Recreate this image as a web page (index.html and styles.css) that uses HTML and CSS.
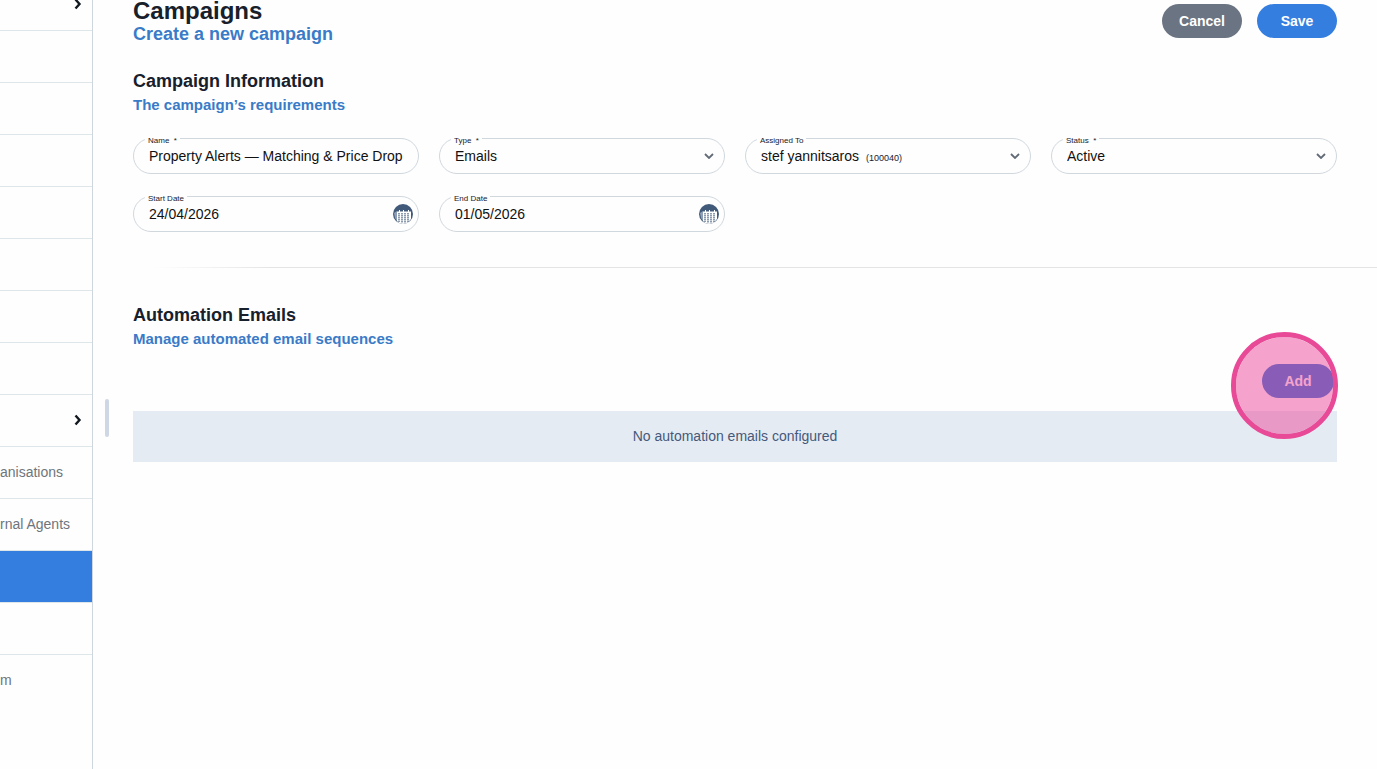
FILE: index.html
```
<!DOCTYPE html>
<html lang="en">
<head>
    <meta charset="UTF-8">
    <meta name="viewport" content="width=device-width, initial-scale=1.0">
    <title>Campaigns</title>
    <link rel="stylesheet" href="styles.css">
</head>
<body>

    <nav class="sidebar" aria-label="Main">
        <ul class="menu">
            <li class="menu-item expandable"><svg class="menu-arrow" viewBox="0 0 8 12"><path d="M1.5 1.5L5.5 6l-4 4.5"/></svg></li>
            <li class="menu-item"></li>
            <li class="menu-item"></li>
            <li class="menu-item"></li>
            <li class="menu-item"></li>
            <li class="menu-item"></li>
            <li class="menu-item"></li>
            <li class="menu-item"></li>
            <li class="menu-item expandable"><svg class="menu-arrow" viewBox="0 0 8 12"><path d="M1.5 1.5L5.5 6l-4 4.5"/></svg></li>
            <li class="menu-item"><a href="#">anisations</a></li>
            <li class="menu-item"><a href="#">rnal Agents</a></li>
            <li class="menu-item active"></li>
            <li class="menu-item"></li>
            <li class="menu-item last"><a href="#">m</a></li>
        </ul>
    </nav>

    <div class="splitter"><span class="splitter-handle"></span></div>

    <main class="main">
        <header class="page-header">
            <div>
                <h1>Campaigns</h1>
                <p class="page-subtitle">Create a new campaign</p>
            </div>
            <div class="actions">
                <button type="button" class="btn btn-grey">Cancel</button>
                <button type="button" class="btn btn-blue">Save</button>
            </div>
        </header>

        <section class="info">
            <h2>Campaign Information</h2>
            <p class="subtitle">The campaign’s requirements</p>

            <form class="fields">
                <div class="field">
                    <label for="name">Name&nbsp; *</label>
                    <input type="text" id="name" value="Property Alerts — Matching &amp; Price Drop">
                </div>
                <div class="field">
                    <label for="type">Type&nbsp; *</label>
                    <select id="type">
                        <option>Emails</option>
                    </select>
                    <svg class="chevron" viewBox="0 0 10 6"><path d="M1 1l4 4 4-4"/></svg>
                </div>
                <div class="field">
                    <label for="assigned">Assigned To</label>
                    <select id="assigned" class="fit">
                        <option>stef yannitsaros</option>
                    </select>
                    <span class="user-id">(100040)</span>
                    <svg class="chevron" viewBox="0 0 10 6"><path d="M1 1l4 4 4-4"/></svg>
                </div>
                <div class="field">
                    <label for="status">Status&nbsp; *</label>
                    <select id="status">
                        <option>Active</option>
                    </select>
                    <svg class="chevron" viewBox="0 0 10 6"><path d="M1 1l4 4 4-4"/></svg>
                </div>
                <div class="field">
                    <label for="start">Start Date</label>
                    <input type="text" id="start" value="24/04/2026">
                    <button type="button" class="date-btn" aria-label="Pick start date">
                        <svg viewBox="0 0 20 20">
                            <circle cx="10" cy="10" r="10" fill="#425a7a"/>
                            <path d="M1 9l3-2v10l-2-3z" fill="#8fa0b6"/>
                            <path d="M4 7.5h2V6h1v1.500h3V6h1v1.500h4V6h1v1.500h2V15l-3 3.500-5 1.500-4-1-2-2z" fill="#fff"/>
                            <path d="M6 9v9M9 9v10M12 9v10M15 9v9" stroke="#425a7a" stroke-width="1.200" stroke-dasharray="1.600 .4"/>
                        </svg>
                    </button>
                </div>
                <div class="field">
                    <label for="end">End Date</label>
                    <input type="text" id="end" value="01/05/2026">
                    <button type="button" class="date-btn" aria-label="Pick end date">
                        <svg viewBox="0 0 20 20">
                            <circle cx="10" cy="10" r="10" fill="#425a7a"/>
                            <path d="M1 9l3-2v10l-2-3z" fill="#8fa0b6"/>
                            <path d="M4 7.5h2V6h1v1.500h3V6h1v1.500h4V6h1v1.500h2V15l-3 3.500-5 1.500-4-1-2-2z" fill="#fff"/>
                            <path d="M6 9v9M9 9v10M12 9v10M15 9v9" stroke="#425a7a" stroke-width="1.200" stroke-dasharray="1.600 .4"/>
                        </svg>
                    </button>
                </div>
            </form>
        </section>

        <hr class="divider">

        <section class="emails">
            <h2>Automation Emails</h2>
            <p class="subtitle">Manage automated email sequences</p>
            <div class="toolbar">
                <div class="spot">
                    <button type="button" class="btn btn-add">Add</button>
                    <span class="spot-ring"></span>
                </div>
            </div>
            <p class="empty">No automation emails configured</p>
        </section>
    </main>

</body>
</html>
```
FILE: styles.css
```
:root {
    --blue: #347ee0;
    --link: #3a7bc8;
    --text: #17202b;
    --line: #dfe6ea;
    --page: #fefefe;
}

* {
    margin: 0;
    padding: 0;
    box-sizing: border-box;
}

body {
    display: flex;
    height: 100vh;
    overflow: hidden;
    font-family: "Liberation Sans", Arial, sans-serif;
    font-size: 14px;
    color: var(--text);
    background: var(--page);
}

/* Sidebar */
.sidebar {
    flex: 0 0 93px;
    overflow: hidden;
    border-right: 1px solid #cfd6de;
}

.menu {
    margin-top: -21px;
    list-style: none;
}

.menu-item {
    display: flex;
    align-items: center;
    height: 52px;
    padding-bottom: 2px;
    border-bottom: 1px solid var(--line);
    white-space: nowrap;
}

.menu-item a {
    color: #6f757b;
    text-decoration: none;
}

.menu-item.expandable {
    justify-content: flex-end;
    padding-right: 10px;
}

.menu-item.active {
    background: var(--blue);
}

.menu-item.last {
    border-bottom: none;
}

.menu-arrow {
    width: 8px;
    height: 12px;
    fill: none;
    stroke: #111820;
    stroke-width: 2.4;
}

/* Drag handle between sidebar and page */
.splitter {
    display: flex;
    flex: 0 0 28px;
    align-items: center;
    justify-content: center;
    padding-top: 66px;
}

.splitter-handle {
    width: 4px;
    height: 38px;
    border-radius: 2px;
    background: #cfd6e4;
}

/* Page */
.main {
    flex: 1;
    min-width: 0;
    padding-left: 12px;
}

.page-header {
    display: flex;
    justify-content: space-between;
    align-items: flex-start;
    padding-right: 40px;
}

h1 {
    font-size: 24px;
    line-height: 22px;
}

h2 {
    font-size: 18px;
    line-height: 24px;
}

.page-subtitle,
.subtitle {
    font-weight: bold;
    line-height: 24px;
    color: var(--link);
}

.page-subtitle {
    font-size: 18px;
}

.subtitle {
    font-size: 15px;
}

.actions {
    display: flex;
    gap: 15px;
    padding-top: 4px;
}

.btn {
    width: 80px;
    height: 34px;
    padding-bottom: 1px;
    border: none;
    border-radius: 17px;
    font-family: inherit;
    font-size: 14px;
    font-weight: bold;
    color: #fff;
    cursor: pointer;
}

.btn-grey {
    background: #6b7482;
}

.btn-blue {
    background: var(--blue);
}

.btn-add {
    width: 72px;
    background: #2670d5;
}

/* Form */
.info {
    padding: 23px 40px 35px 0;
}

.fields {
    display: grid;
    grid-template-columns: repeat(4, 1fr);
    gap: 22px 20px;
    margin-top: 21px;
}

.field {
    position: relative;
    display: flex;
    align-items: center;
    height: 36px;
    padding: 0 15px;
    border: 1px solid #d0d8de;
    border-radius: 18px;
}

.field label {
    position: absolute;
    top: -3px;
    left: 11px;
    padding: 0 3px;
    font-size: 8px;
    line-height: 10px;
    background: var(--page);
}

.field input,
.field select {
    flex: 1;
    min-width: 0;
    border: none;
    outline: none;
    appearance: none;
    font-family: inherit;
    font-size: 14px;
    color: #111;
    background: transparent;
}

.field select.fit {
    flex: none;
}

.user-id {
    margin-left: 6px;
    padding-top: 3px;
    font-size: 9px;
}

.chevron {
    width: 10px;
    height: 6px;
    margin-left: auto;
    margin-right: -5px;
    fill: none;
    stroke: #626a76;
    stroke-width: 1.8;
    pointer-events: none;
}

.date-btn {
    width: 20px;
    height: 20px;
    margin-right: -10px;
    border: none;
    background: none;
    cursor: pointer;
}

.date-btn svg {
    display: block;
}

.divider {
    height: 1px;
    border: none;
    background: linear-gradient(to right, transparent 20px, #e3e4e6 140px);
}

/* Automation emails */
.emails {
    padding: 35px 40px 0 0;
}

.toolbar {
    display: flex;
    justify-content: flex-end;
    padding: 13px 3px 13px 0;
}

.spot {
    position: relative;
    height: 34px;
}

.spot-ring {
    position: absolute;
    top: -32px;
    left: -31px;
    width: 107px;
    height: 107px;
    border: 5px solid #e84a98;
    border-radius: 50%;
    background: rgba(236, 72, 153, 0.5);
    background-clip: padding-box;
    pointer-events: none;
}

.empty {
    padding: 15px;
    line-height: 21px;
    text-align: center;
    color: #45597a;
    background: #e5ebf3;
}
```
